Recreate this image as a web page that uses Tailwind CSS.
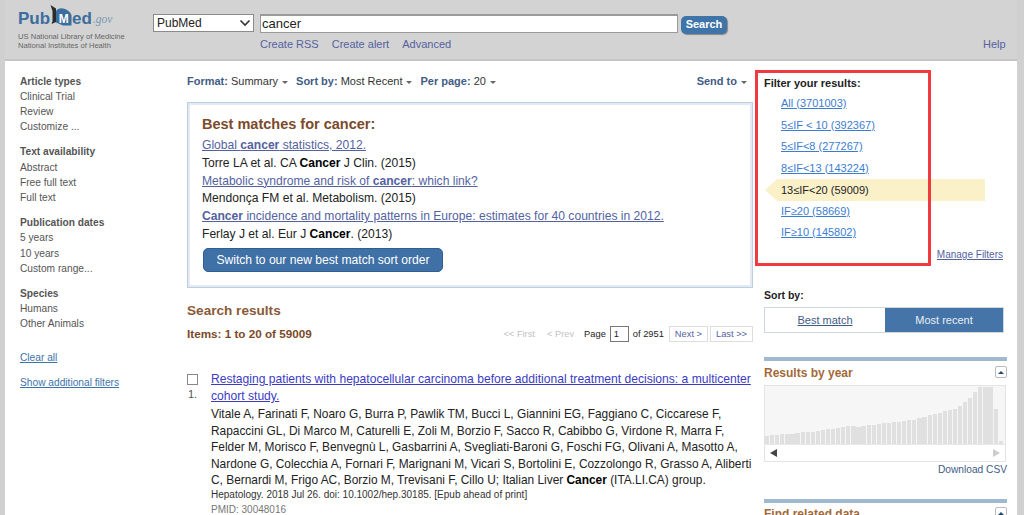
<!DOCTYPE html>
<html><head><meta charset="utf-8"><script src="https://cdn.jsdelivr.net/npm/@tailwindcss/browser@4"></script></head>
<body class="bg-white m-0">
<div class="w-[1024px] h-[515px] overflow-hidden flex font-['Liberation_Sans',Arial,sans-serif] text-[12px] leading-[15px] text-[#222] relative">
  <div class="w-[1024px] flex flex-col">
    <header class="h-[61px] bg-[#d3d3d3] border-b-2 border-[#c4c4c4] flex shrink-0 relative">
      <div class="w-[153px] pl-[18px] pt-[5px] shrink-0">
        <div class="flex items-end h-[24px] font-bold text-[17px] leading-[20px] text-[#3c6d9f]">
          <span>Pub</span>
          <svg width="22" height="22" viewBox="0 0 22 22" class="mb-[3px]"><path d="M0.500 1 L6 4.500 V18 L1.500 20 L2.500 17 V7 Z" fill="#2b2b2b"/><path d="M6 7 Q8 3.500 13 4.500 Q19 5.500 21.500 11 V21.500 H13 L6 18.500Z" fill="#3c6d9f"/><text x="13.800" y="19" text-anchor="middle" font-family="Liberation Sans, Arial, sans-serif" font-weight="700" font-size="12" fill="#fff">M</text></svg>
          <span>ed</span><span class="font-['Liberation_Serif',serif] italic font-normal text-[11.500px] text-[#7d99b5] ml-[1px] leading-[19px]">.gov</span>
        </div>
        <div class="text-[7.6px] leading-[9.5px] text-[#666] mt-[2.500px]">US National Library of Medicine<br>National Institutes of Health</div>
      </div>
      <div class="pt-[14px] shrink-0">
        <div class="flex items-start h-[20px]">
          <div class="w-[101px] h-[18px] bg-white border border-[#8b8b8b] text-[12px] pl-[3px] leading-[16px] flex justify-between items-center pr-[2px]">PubMed
            <svg width="12" height="8" viewBox="0 0 12 8"><path d="M1.500 1.500 L6 6 L10.500 1.500" fill="none" stroke="#333" stroke-width="1.600"/></svg></div>
          <div class="w-[418px] h-[19px] ml-[6px] bg-white border border-[#9a9a9a] border-t-2 text-[13px] leading-[15px] pl-[1px]">cancer</div>
          <div class="w-[46px] h-[18px] ml-[3px] mt-[2px] rounded-[5px] bg-[#3f74a8] text-white font-bold text-[11px] leading-[16px] text-center shadow-[1px_1px_1px_#888]">Search</div>
        </div>
        <div class="flex mt-[3px] ml-[107px] text-[#53629f] gap-[13px] text-[11px]"><span>Create RSS</span><span>Create alert</span><span>Advanced</span></div>
      </div>
      <div class="absolute left-[983px] top-[37px] text-[11px] text-[#53629f]">Help</div>
    </header>
    <div class="flex flex-1 min-h-0 relative">
      <aside class="w-[167px] shrink-0 pl-[20px] pt-[12.500px] text-[10.200px] text-[#555] leading-[15.200px]">
        <div class="font-bold">Article types</div><div>Clinical Trial</div><div>Review</div><div>Customize ...</div>
        <div class="font-bold mt-[10px]">Text availability</div><div>Abstract</div><div>Free full text</div><div>Full text</div>
        <div class="font-bold mt-[10px]">Publication dates</div><div>5 years</div><div>10 years</div><div>Custom range...</div>
        <div class="font-bold mt-[10px]">Species</div><div>Humans</div><div>Other Animals</div>
        <div class="mt-[18px] text-[#3c74a8] underline">Clear all</div>
        <div class="mt-[10px] text-[#3c74a8] underline">Show additional filters</div>
      </aside>
      <main class="w-[567px] shrink-0 ml-[20px] pt-[13px] relative">
        <div class="flex text-[11px] leading-[15px] h-[15px] pr-[7px]">
          <span class="font-bold text-[#3f5c85]">Format:&nbsp;</span><span class="text-[#333]">Summary</span><span class="ml-[4px] mt-[7px] border-x-[3.500px] border-t-[3.500px] border-x-transparent border-t-[#666] h-0 w-0"></span>
          <span class="font-bold text-[#3f5c85] ml-[8px]">Sort by:&nbsp;</span><span class="text-[#333]">Most Recent</span><span class="ml-[4px] mt-[7px] border-x-[3.500px] border-t-[3.500px] border-x-transparent border-t-[#666] h-0 w-0"></span>
          <span class="font-bold text-[#3f5c85] ml-[8px]">Per page:&nbsp;</span><span class="text-[#333]">20</span><span class="ml-[4px] mt-[7px] border-x-[3.500px] border-t-[3.500px] border-x-transparent border-t-[#666] h-0 w-0"></span>
          <span class="ml-auto font-bold text-[#3f5c85]">Send to<span class="inline-block ml-[4px] mb-[1px] border-x-[3.500px] border-t-[3.500px] border-x-transparent border-t-[#666] h-0 w-0"></span></span>
        </div>
        <section class="w-[566px] h-[186px] mt-[13px] border border-[#bccfe0] shadow-[inset_0_0_0_2px_#e3eaf3] pl-[14px] pt-[12px] text-[12.100px]">
          <div class="text-[14.500px] leading-[18px] font-bold text-[#7c4a2a]">Best matches for cancer:</div>
          <div class="mt-[4px] leading-[17.800px]">
            <div class="text-[#53629f] underline">Global <b>cancer</b> statistics, 2012.</div>
            <div class="text-[#222]">Torre LA et al. CA <b class="text-black">Cancer</b> J Clin. (2015)</div>
            <div class="text-[#53629f] underline">Metabolic syndrome and risk of <b>cancer</b>: which link?</div>
            <div class="text-[#222]">Mendonça FM et al. Metabolism. (2015)</div>
            <div class="text-[#53629f] underline"><b>Cancer</b> incidence and mortality patterns in Europe: estimates for 40 countries in 2012.</div>
            <div class="text-[#222]">Ferlay J et al. Eur J <b class="text-black">Cancer</b>. (2013)</div>
          </div>
          <div class="w-[240px] h-[24px] mt-[4px] ml-[1px] rounded-[5px] bg-[#3f70a6] border border-[#2f5f90] text-white text-[12.100px] leading-[22px] text-center">Switch to our new best match sort order</div>
        </section>
        <div class="mt-[14px] text-[13.600px] leading-[17px] font-bold text-[#8a5a38]">Search results</div>
        <div class="flex mt-[4px] h-[20px] items-center">
          <span class="font-bold text-[11.700px] text-[#7c4a2a]">Items: 1 to 20 of 59009</span>
          <div class="ml-auto flex items-center text-[9.300px] pr-[1px] mt-[2px]">
            <span class="text-[#c2c2c2] mr-[12px]">&lt;&lt; First</span><span class="text-[#c2c2c2] mr-[10px]">&lt; Prev</span>
            <span>Page</span><span class="w-[19px] h-[16px] mx-[4px] border border-[#777] pl-[3px] leading-[14px]">1</span><span>of 2951</span>
            <span class="ml-[5px] h-[16px] leading-[14px] px-[5px] border border-[#ddd] text-[#53629f]">Next &gt;</span><span class="ml-[2px] h-[16px] leading-[14px] px-[5px] border border-[#ddd] text-[#53629f]">Last &gt;&gt;</span>
          </div>
        </div>
        <article class="flex mt-[28px]">
          <div class="w-[24px] shrink-0"><div class="w-[11px] h-[11px] border border-[#888] mt-[3px]"></div><div class="mt-[2px] ml-[1px] text-[11px] text-[#555]">1.</div></div>
          <div class="min-w-0 whitespace-nowrap">
            <div class="text-[12.100px] leading-[17px] text-[#3b3bc4] underline">Restaging patients with hepatocellular carcinoma before additional treatment decisions: a multicenter<br>cohort study.</div>
            <div class="text-[11.900px] leading-[16.600px] mt-[1px] text-[#222]">Vitale A, Farinati F, Noaro G, Burra P, Pawlik TM, Bucci L, Giannini EG, Faggiano C, Ciccarese F,<br>Rapaccini GL, Di Marco M, Caturelli E, Zoli M, Borzio F, Sacco R, Cabibbo G, Virdone R, Marra F,<br>Felder M, Morisco F, Benvegnù L, Gasbarrini A, Svegliati-Baroni G, Foschi FG, Olivani A, Masotto A,<br>Nardone G, Colecchia A, Fornari F, Marignani M, Vicari S, Bortolini E, Cozzolongo R, Grasso A, Aliberti<br>C, Bernardi M, Frigo AC, Borzio M, Trevisani F, Cillo U; Italian Liver <b class="text-black">Cancer</b> (ITA.LI.CA) group.</div>
            <div class="text-[10px] leading-[14px] -mt-[1px] text-[#333]">Hepatology. 2018 Jul 26. doi: 10.1002/hep.30185. [Epub ahead of print]</div>
            <div class="text-[10px] leading-[14px] mt-[1px] text-[#777]">PMID: 30048016</div>
          </div>
        </article>
      </main>
      <aside class="flex-1 relative">
        <div class="absolute left-[1px] top-[9px] w-[176px] h-[196px] border-[3px] border-[#f03a3f] z-10 pointer-events-none"></div>
        <div class="absolute left-[10px] top-[15px] font-bold text-[11px] text-[#222] z-20">Filter your results:</div>
        <ul class="absolute left-[27px] top-[35px] text-[11px] text-[#3c7dd0] underline leading-[15px] flex flex-col gap-[6.500px] z-0">
          <li>All (3701003)</li><li>5≤IF &lt; 10 (392367)</li><li>5≤IF&lt;8 (277267)</li><li>8≤IF&lt;13 (143224)</li>
          <li class="h-[15px]"></li><li>IF≥20 (58669)</li><li>IF≥10 (145802)</li>
        </ul>
        <div class="absolute left-[11px] top-[118px] w-[220px] h-[22px] bg-[#fbf1c9] [clip-path:polygon(12px_0,100%_0,100%_100%,12px_100%,0_50%)] pl-[16px] text-[11px] leading-[22px] text-[#222]">13≤IF&lt;20 (59009)</div>
        <div class="absolute right-[21px] top-[186px] text-[10px] text-[#53629f] underline">Manage Filters</div>
        <div class="absolute left-[10px] top-[227px] font-bold text-[10.500px] text-[#222]">Sort by:</div>
        <div class="absolute left-[10px] top-[246px] w-[240px] h-[26px] flex border border-[#cfd6dc] text-[11px] leading-[24px] text-center">
          <div class="w-[120px] text-[#3f5c85] underline">Best match</div><div class="flex-1 bg-[#4575a8] text-[#e9eef4]">Most recent</div>
        </div>
        <section class="absolute left-[10px] top-[296px] w-[243px]">
          <div class="h-[4px] bg-[#9fb9d1]"></div>
          <div class="flex justify-between h-[24px] pt-[5px]"><span class="font-bold text-[12px] text-[#a3693a]">Results by year</span>
            <span class="w-[12px] h-[12px] border border-[#bbb] rounded-[2px] flex items-center justify-center"><span class="border-x-[3px] border-b-[3px] border-x-transparent border-b-[#27466d]"></span></span></div>
          <div class="w-[242px] border border-[#e4e4e4]">
            <div class="h-[58px] bg-[#f6f6f6] flex items-end gap-[0.900px] pr-[1px]">
              <i class="w-[4.200px] h-[8px] bg-[#e0e0e0]"></i><i class="w-[4.200px] h-[9px] bg-[#e0e0e0]"></i><i class="w-[4.200px] h-[9px] bg-[#e0e0e0]"></i><i class="w-[4.200px] h-[10px] bg-[#e0e0e0]"></i><i class="w-[4.200px] h-[10px] bg-[#e0e0e0]"></i><i class="w-[4.200px] h-[10px] bg-[#e0e0e0]"></i><i class="w-[4.200px] h-[11px] bg-[#e0e0e0]"></i><i class="w-[4.200px] h-[12px] bg-[#e0e0e0]"></i><i class="w-[4.200px] h-[12px] bg-[#e0e0e0]"></i><i class="w-[4.200px] h-[12px] bg-[#e0e0e0]"></i><i class="w-[4.200px] h-[13px] bg-[#e0e0e0]"></i><i class="w-[4.200px] h-[14px] bg-[#e0e0e0]"></i><i class="w-[4.200px] h-[15px] bg-[#e0e0e0]"></i><i class="w-[4.200px] h-[15px] bg-[#e0e0e0]"></i><i class="w-[4.200px] h-[16px] bg-[#e0e0e0]"></i><i class="w-[4.200px] h-[17px] bg-[#e0e0e0]"></i><i class="w-[4.200px] h-[18px] bg-[#e0e0e0]"></i><i class="w-[4.200px] h-[18px] bg-[#e0e0e0]"></i><i class="w-[4.200px] h-[17px] bg-[#e0e0e0]"></i><i class="w-[4.200px] h-[18px] bg-[#e0e0e0]"></i><i class="w-[4.200px] h-[19px] bg-[#e0e0e0]"></i><i class="w-[4.200px] h-[19px] bg-[#e0e0e0]"></i><i class="w-[4.200px] h-[20px] bg-[#e0e0e0]"></i><i class="w-[4.200px] h-[21px] bg-[#e0e0e0]"></i><i class="w-[4.200px] h-[21px] bg-[#e0e0e0]"></i><i class="w-[4.200px] h-[22px] bg-[#e0e0e0]"></i><i class="w-[4.200px] h-[22px] bg-[#e0e0e0]"></i><i class="w-[4.200px] h-[23px] bg-[#e0e0e0]"></i><i class="w-[4.200px] h-[24px] bg-[#e0e0e0]"></i><i class="w-[4.200px] h-[24px] bg-[#e0e0e0]"></i><i class="w-[4.200px] h-[26px] bg-[#e0e0e0]"></i><i class="w-[4.200px] h-[27px] bg-[#e0e0e0]"></i><i class="w-[4.200px] h-[29px] bg-[#e0e0e0]"></i><i class="w-[4.200px] h-[30px] bg-[#e0e0e0]"></i><i class="w-[4.200px] h-[31px] bg-[#e0e0e0]"></i><i class="w-[4.200px] h-[33px] bg-[#e0e0e0]"></i><i class="w-[4.200px] h-[34px] bg-[#e0e0e0]"></i><i class="w-[4.200px] h-[35px] bg-[#e0e0e0]"></i><i class="w-[4.200px] h-[38px] bg-[#e0e0e0]"></i><i class="w-[4.200px] h-[42px] bg-[#e0e0e0]"></i><i class="w-[4.200px] h-[46px] bg-[#e0e0e0]"></i><i class="w-[4.200px] h-[52px] bg-[#e0e0e0]"></i><i class="w-[4.200px] h-[57px] bg-[#e0e0e0]"></i><i class="w-[4.200px] h-[57px] bg-[#e0e0e0]"></i><i class="w-[4.200px] h-[57px] bg-[#e0e0e0]"></i><i class="w-[4.200px] h-[35px] bg-[#e0e0e0]"></i><i class="w-[4.200px] h-[3px] bg-[#e0e0e0]"></i>
            </div>
            <div class="h-[17px] border-t border-[#e8e8e8] flex items-center justify-between px-[5px]">
              <span class="border-y-[4px] border-r-[7px] border-y-transparent border-r-[#444]"></span><span class="border-y-[4px] border-l-[7px] border-y-transparent border-l-[#ccc]"></span>
            </div>
          </div>
          <div class="text-right text-[10.200px] text-[#3f5c85]">Download CSV</div>
        </section>
        <section class="absolute left-[10px] top-[438px] w-[243px]">
          <div class="h-[4px] bg-[#9fb9d1]"></div>
          <div class="flex justify-between pt-[4px]"><span class="font-bold text-[12px] text-[#a3693a]">Find related data</span>
            <span class="w-[12px] h-[12px] border border-[#bbb] rounded-[2px] flex items-center justify-center"><span class="border-x-[3px] border-b-[3px] border-x-transparent border-b-[#27466d]"></span></span></div>
        </section>
      </aside>
    </div>
  </div>
  <div class="absolute left-0 top-0 w-[5px] h-full bg-[#d0d0d0] z-30"></div>
  <div class="absolute right-0 top-0 w-[7px] h-full bg-[#d0d0d0] z-30"></div>
</div>
</body></html>
